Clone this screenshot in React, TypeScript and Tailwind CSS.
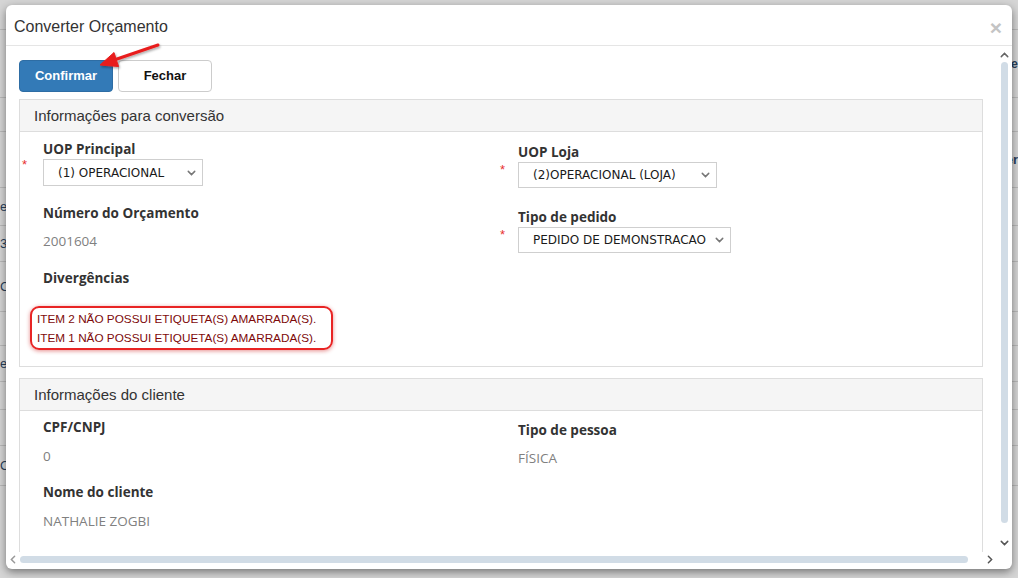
import React from "react";

const sans = { fontFamily: '"Liberation Sans", Arial, sans-serif' };
const open = { fontFamily: '"Open Sans", "Noto Sans", sans-serif' };
const verd = { fontFamily: '"DejaVu Sans", Verdana, sans-serif' };

const Chevron = ({ dir = "down", className = "" }: { dir?: "down" | "up" | "left" | "right"; className?: string }) => {
  const paths: Record<string, string> = {
    down: "M1 1.5 L4.5 5 L8 1.5",
    up: "M1 5 L4.5 1.5 L8 5",
    left: "M5 1 L1.5 4.5 L5 8",
    right: "M1.5 1 L5 4.5 L1.5 8",
  };
  const vb = dir === "down" || dir === "up" ? "0 0 9 6.5" : "0 0 6.5 9";
  return (
    <svg viewBox={vb} className={className} fill="none" stroke="currentColor" strokeWidth="1.6" strokeLinecap="round">
      <path d={paths[dir]} />
    </svg>
  );
};

const Star = ({ w }: { w: string }) => (
  <span className={`${w} shrink-0 text-[13px] leading-none text-[#e8312f]`} style={sans}>
    *
  </span>
);

const Select = ({ value, width }: { value: string; width: string }) => (
  <div className={`${width} flex items-center justify-between border border-[#cfcfcf] bg-white pl-[14px] pr-[6px] text-[12px] text-[#1a1a1a]`} style={verd}>
    <span>{value}</span>
    <Chevron className="h-[6px] w-[9px] text-[#777]" />
  </div>
);

const Label = ({ children, className = "" }: { children: React.ReactNode; className?: string }) => (
  <div className={`text-[13.5px] font-bold leading-[20px] text-[#333] ${className}`} style={open}>
    {children}
  </div>
);

const Value = ({ children, className = "" }: { children: React.ReactNode; className?: string }) => (
  <div className={`text-[13.5px] leading-[20px] text-[#808080] ${className}`} style={open}>
    {children}
  </div>
);

const PanelHeader = ({ title }: { title: string }) => (
  <div className="flex h-[32px] items-center border-b border-[#dddddd] bg-[#f5f5f5] pl-[14px] pt-[1px] text-[15px] text-[#333]" style={sans}>
    {title}
  </div>
);

const bgRows = [
  { h: "h-[30px]", l: "", r: "" },
  { h: "h-[68px]", l: "", r: "se" },
  { h: "h-[34px]", l: "", r: "" },
  { h: "h-[56px]", l: "", r: "er" },
  { h: "h-[38px]", l: "e", r: "" },
  { h: "h-[36px]", l: "3", r: "" },
  { h: "h-[50px]", l: "C", r: "" },
  { h: "h-[34px]", l: "", r: "" },
  { h: "h-[36px]", l: "e", r: "" },
  { h: "h-[28px]", l: "", r: "" },
  { h: "h-[36px]", l: "", r: "" },
  { h: "h-[40px]", l: "O", r: "" },
];

export default function App() {
  return (
    <div className="relative h-[578px] w-[1018px] overflow-hidden bg-[#d5d5d5]" style={sans}>
      {/* page behind the overlay */}
      <div className="flex flex-col">
        {bgRows.map((row, i) => (
          <div key={i} className={`${row.h} flex items-center justify-between border-b border-[#b9b9b9] text-[13px] text-[#2a3f5a]`}>
            <span>{row.l}</span>
            <span className="font-bold">{row.r}</span>
          </div>
        ))}
      </div>

      {/* modal */}
      <div className="absolute left-[6px] top-[5px] flex h-[564px] w-[1006px] flex-col overflow-hidden rounded-[6px] bg-white shadow-[0_3px_9px_rgba(0,0,0,0.45)]">
        <div className="flex h-[41px] shrink-0 items-center justify-between border-b border-[#e5e5e5] pl-[8px] pr-[10px] pt-[3px]">
          <span className="text-[16px] text-[#333]">Converter Orçamento</span>
          <span className="mt-[2px] text-[21px] font-bold leading-none text-[#c4c4c4]">×</span>
        </div>

        <div className="flex h-[506px] shrink-0">
          <div className="flex-1 overflow-hidden pl-[13px] pt-[14px]">
            <div className="flex gap-[5px]">
              <button className="h-[32px] w-[94px] rounded-[4px] border border-[#2e6da4] bg-[#337ab7] text-[13px] font-bold text-white">
                Confirmar
              </button>
              <button className="h-[32px] w-[94px] rounded-[4px] border border-[#cccccc] bg-white text-[13px] font-bold text-[#111]">
                Fechar
              </button>
            </div>

            <div className="mt-[7px] w-[964px] border border-[#dddddd]">
              <PanelHeader title="Informações para conversão" />
              <div className="grid grid-cols-[475px_1fr] pb-[16px] pl-[23px]">
                <div className="flex flex-col pt-[7px]">
                  <Label>UOP Principal</Label>
                  <div className="flex">
                    <Star w="-ml-[21px] w-[21px] -mt-[1px]" />
                    <div className="flex h-[27px]">
                      <Select value="(1) OPERACIONAL" width="w-[160px]" />
                    </div>
                  </div>
                  <Label className="mt-[17px]">Número do Orçamento</Label>
                  <Value className="mt-[8px]">2001604</Value>
                  <Label className="mt-[17px]">Divergências</Label>
                  <div
                    className="-ml-[13px] mt-[18px] h-[44px] w-[303px] rounded-[9px] border-2 border-[#e82424] pl-[5px] pt-[1px] text-[11.75px] leading-[19px] text-[#7d0a0a] shadow-[0_1px_4px_rgba(200,0,0,0.45)]"
                    style={sans}
                  >
                    <div>ITEM 2 NÃO POSSUI ETIQUETA(S) AMARRADA(S).</div>
                    <div>ITEM 1 NÃO POSSUI ETIQUETA(S) AMARRADA(S).</div>
                  </div>
                </div>

                <div className="flex flex-col pt-[10px]">
                  <Label>UOP Loja</Label>
                  <div className="flex">
                    <Star w="-ml-[18px] w-[18px] pt-[1px]" />
                    <div className="flex h-[26px]">
                      <Select value="(2)OPERACIONAL (LOJA)" width="w-[199px]" />
                    </div>
                  </div>
                  <Label className="mt-[19px]">Tipo de pedido</Label>
                  <div className="flex">
                    <Star w="-ml-[18px] w-[18px] pt-[1px]" />
                    <div className="flex h-[26px]">
                      <Select value="PEDIDO DE DEMONSTRACAO" width="w-[213px]" />
                    </div>
                  </div>
                </div>
              </div>
            </div>

            <div className="mt-[11px] w-[964px] border border-[#dddddd]">
              <PanelHeader title="Informações do cliente" />
              <div className="grid grid-cols-[475px_1fr] pb-[30px] pl-[23px]">
                <div className="flex flex-col pt-[6px]">
                  <Label>CPF/CNPJ</Label>
                  <Value className="mt-[9px]">0</Value>
                  <Label className="mt-[16px]">Nome do cliente</Label>
                  <Value className="mt-[9px]">NATHALIE ZOGBI</Value>
                </div>
                <div className="flex flex-col pt-[9px]">
                  <Label>Tipo de pessoa</Label>
                  <Value className="mt-[8px]">FÍSICA</Value>
                </div>
              </div>
            </div>
          </div>

          {/* vertical scrollbar */}
          <div className="flex w-[15px] shrink-0 flex-col items-center">
            <div className="flex h-[16px] items-center justify-center pt-[2px]">
              <Chevron dir="up" className="h-[6px] w-[9px] text-[#666]" />
            </div>
            <div className="w-[7px] flex-1 rounded-full bg-[#d1dce6]" />
            <div className="flex h-[29px] justify-center pt-[17px]">
              <Chevron dir="down" className="h-[6px] w-[9px] text-[#555]" />
            </div>
          </div>
        </div>

        {/* horizontal scrollbar */}
        <div className="flex h-[15px] shrink-0 items-center">
          <div className="flex w-[14px] justify-center">
            <Chevron dir="left" className="h-[9px] w-[6px] text-[#999]" />
          </div>
          <div className="h-[7px] w-[948px] rounded-full bg-[#d1dce6]" />
          <div className="flex w-[29px] pl-[19px]">
            <Chevron dir="right" className="h-[9px] w-[6px] text-[#555]" />
          </div>
        </div>
      </div>

      {/* red arrow annotation */}
      <svg className="absolute left-0 top-0 h-[100px] w-[200px]" viewBox="0 0 200 100">
        <defs>
          <filter id="sh" x="-20%" y="-20%" width="140%" height="140%">
            <feDropShadow dx="1" dy="1.5" stdDeviation="1.2" floodColor="#000" floodOpacity="0.35" />
          </filter>
        </defs>
        <g filter="url(#sh)" fill="#e81e1e" stroke="#e81e1e">
          <line x1="158" y1="45" x2="114" y2="60" strokeWidth="3" strokeLinecap="round" />
          <polygon points="100,65 114,52.5 118.5,66.5" strokeWidth="1" strokeLinejoin="round" />
        </g>
      </svg>
    </div>
  );
}
